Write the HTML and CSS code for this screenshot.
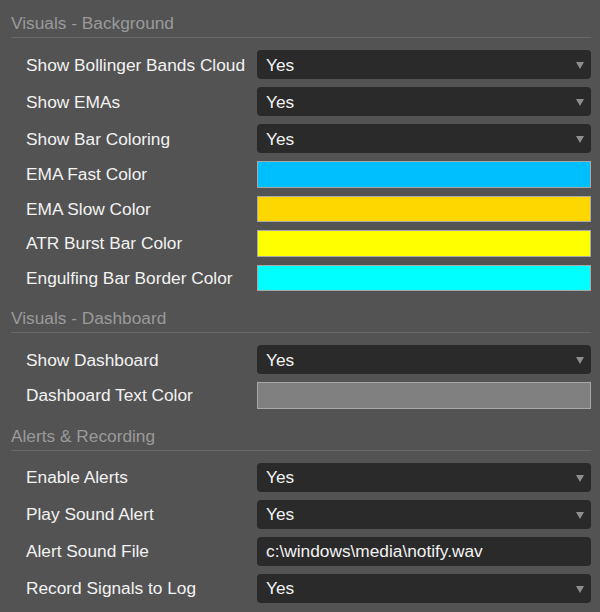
FILE: index.html
```html
<!doctype html>
<html lang="en">
  <head>
    <meta charset="UTF-8" />
    <title>Indicator Settings</title>
    <link rel="stylesheet" href="styles.css">
  </head>
  <body>
    <div class="settings">
      <section class="group">
        <h2 class="group-title">Visuals - Background</h2>
        <div class="group-body">
          <label class="row">
            <span class="row-label">Show Bollinger Bands Cloud</span>
            <span class="select"><select><option>Yes</option><option>No</option></select></span>
          </label>
          <label class="row">
            <span class="row-label">Show EMAs</span>
            <span class="select"><select><option>Yes</option><option>No</option></select></span>
          </label>
          <label class="row">
            <span class="row-label">Show Bar Coloring</span>
            <span class="select"><select><option>Yes</option><option>No</option></select></span>
          </label>
          <div class="row">
            <span class="row-label">EMA Fast Color</span>
            <span class="swatch" style="background: #00bfff"></span>
          </div>
          <div class="row">
            <span class="row-label">EMA Slow Color</span>
            <span class="swatch" style="background: #ffd700"></span>
          </div>
          <div class="row">
            <span class="row-label">ATR Burst Bar Color</span>
            <span class="swatch" style="background: #ffff00"></span>
          </div>
          <div class="row">
            <span class="row-label">Engulfing Bar Border Color</span>
            <span class="swatch" style="background: #00ffff"></span>
          </div>
        </div>
      </section>

      <section class="group">
        <h2 class="group-title">Visuals - Dashboard</h2>
        <div class="group-body">
          <label class="row">
            <span class="row-label">Show Dashboard</span>
            <span class="select"><select><option>Yes</option><option>No</option></select></span>
          </label>
          <div class="row">
            <span class="row-label">Dashboard Text Color</span>
            <span class="swatch" style="background: #808080"></span>
          </div>
        </div>
      </section>

      <section class="group">
        <h2 class="group-title">Alerts &amp; Recording</h2>
        <div class="group-body">
          <label class="row">
            <span class="row-label">Enable Alerts</span>
            <span class="select"><select><option>Yes</option><option>No</option></select></span>
          </label>
          <label class="row">
            <span class="row-label">Play Sound Alert</span>
            <span class="select"><select><option>Yes</option><option>No</option></select></span>
          </label>
          <label class="row">
            <span class="row-label">Alert Sound File</span>
            <input class="text-input" type="text" value="c:\windows\media\notify.wav" />
          </label>
          <label class="row">
            <span class="row-label">Record Signals to Log</span>
            <span class="select"><select><option>Yes</option><option>No</option></select></span>
          </label>
        </div>
      </section>
    </div>
  </body>
</html>
```

FILE: styles.css
```css
* {
  box-sizing: border-box;
  margin: 0;
  padding: 0;
}

body {
  font-family: "Liberation Sans", Arial, sans-serif;
  font-size: 17.3px;
  background: #535353;
  color: #f2f2f2;
}

.settings {
  padding: 4px 9px 0 11px;
}

.group-title {
  font-size: 17.3px;
  font-weight: normal;
  line-height: 20px;
  color: #9a9a9a;
  padding: 9px 0 4px;
  border-bottom: 1px solid #686868;
}

.group-body {
  padding-top: 12px;
}

.row {
  display: grid;
  grid-template-columns: 231px 1fr;
  align-items: center;
  padding-left: 15px;
  margin-bottom: 8px;
}

.row-label {
  line-height: 20px;
  white-space: nowrap;
}

/* dropdowns: dark rounded box with a small grey arrow */
.select {
  position: relative;
  display: block;
}

.select select,
.text-input {
  display: block;
  width: 100%;
  height: 29px;
  padding: 0 24px 0 9px;
  font: inherit;
  color: #f2f2f2;
  background: #2a2a2a;
  border: none;
  border-radius: 4px;
  appearance: none;
  outline: none;
}

.select::after {
  content: "";
  position: absolute;
  right: 7px;
  top: 12px;
  border-left: 4px solid transparent;
  border-right: 4px solid transparent;
  border-top: 7px solid #8e8e8e;
  pointer-events: none;
}

.swatch {
  display: block;
  height: 26.5px;
  border: 1px solid #a8a8a8;
}
```
